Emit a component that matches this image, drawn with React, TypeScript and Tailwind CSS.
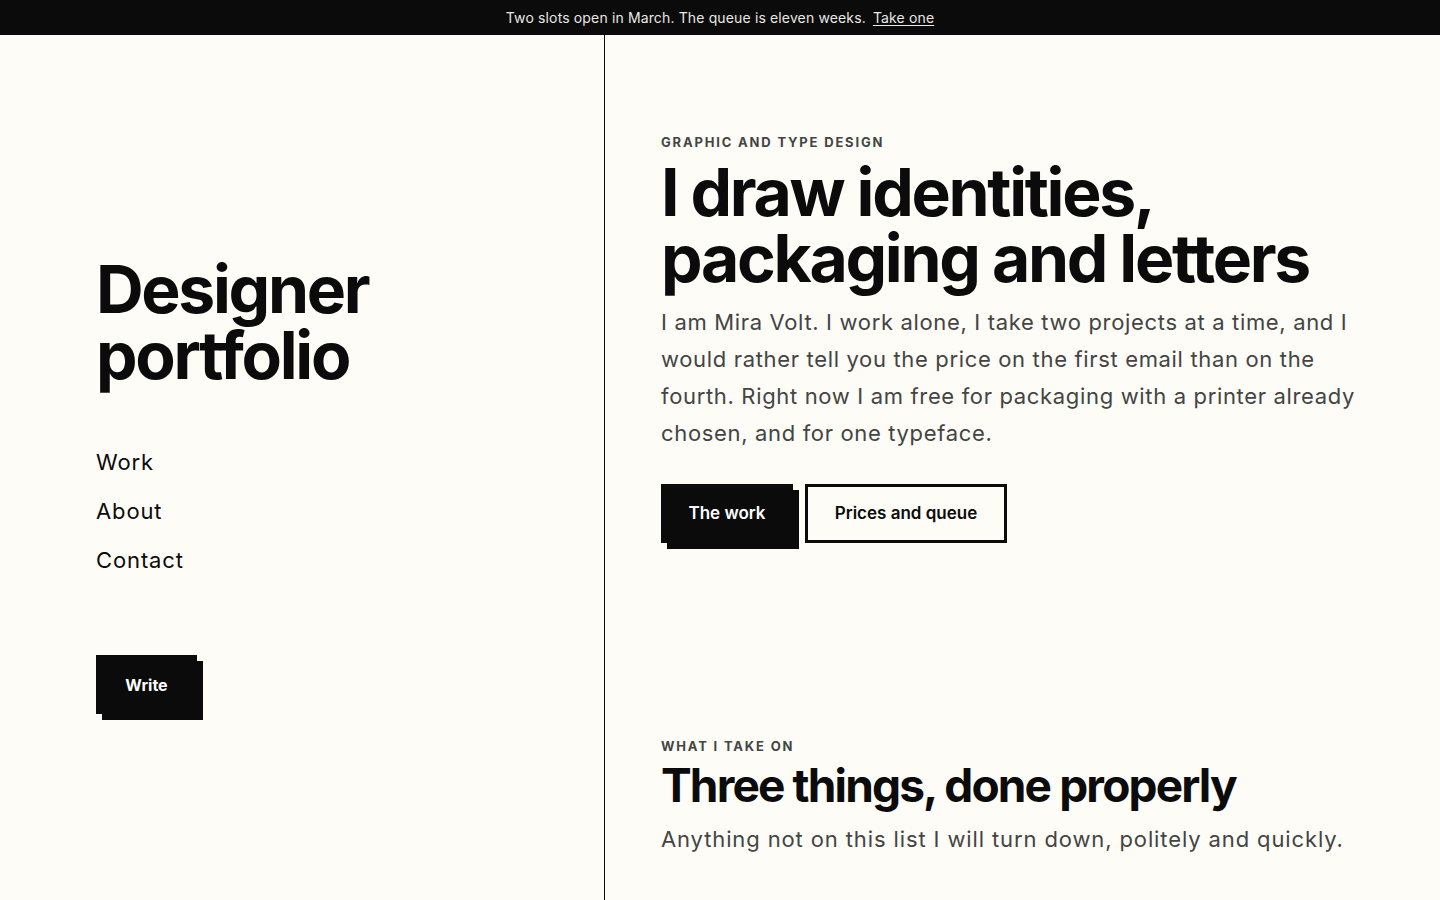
export default function App() {
  const links = ["Work", "About", "Contact"];

  return (
    <div className="min-h-screen bg-[#fdfcf7] text-[#0b0b0b] font-['Inter','Noto_Sans',sans-serif]">
      <div className="h-[35px] bg-[#0b0b0b] flex items-center justify-center gap-[7px] text-[14px] tracking-[0.01em] text-[#e8e8e4]">
        <span>Two slots open in March. The queue is eleven weeks.</span>
        <a href="#" className="underline underline-offset-2">Take one</a>
      </div>

      <div className="flex h-[865px]">
        <aside className="w-[605px] shrink-0 border-r border-[#0b0b0b] pl-24 pt-[221px]">
          <h1 className="text-[66px] leading-[66px] font-bold tracking-[-0.035em]">
            Designer
            <br />
            portfolio
          </h1>

          <nav className="mt-[58px] flex flex-col gap-4">
            {links.map((l) => (
              <a key={l} href="#" className="text-[22px] leading-[33px] tracking-[0.04em]">
                {l}
              </a>
            ))}
          </nav>

          <div className="mt-[78px] relative w-[101px] h-[59px]">
            <div className="absolute left-[6px] top-[6px] w-[101px] h-[59px] bg-[#0b0b0b]" />
            <button className="relative w-[101px] h-[59px] bg-[#0b0b0b] text-white text-[16px] font-bold">
              Write
            </button>
          </div>
        </aside>

        <main className="flex-1 pl-14 pt-[97px]">
          <p className="text-[13px] leading-5 font-bold tracking-[0.14em] text-[#444]">
            GRAPHIC AND TYPE DESIGN
          </p>
          <h2 className="mt-[7px] text-[66px] leading-[66px] font-bold tracking-[-0.035em]">
            I draw identities,
            <br />
            packaging and letters
          </h2>
          <p className="mt-[13px] max-w-[720px] text-[22px] leading-[37px] tracking-[0.03em] text-[#444]">
            I am Mira Volt. I work alone, I take two projects at a time, and I would rather tell you the price
            on the first email than on the fourth. Right now I am free for packaging with a printer already
            chosen, and for one typeface.
          </p>

          <div className="mt-8 flex gap-3">
            <div className="relative w-[132px] h-[59px]">
              <div className="absolute left-[6px] top-[6px] w-[132px] h-[59px] bg-[#0b0b0b]" />
              <button className="relative w-[132px] h-[59px] bg-[#0b0b0b] text-white text-[17px] font-semibold">
                The work
              </button>
            </div>
            <button className="w-[202px] h-[59px] border-[3px] border-[#0b0b0b] text-[17px] font-semibold">
              Prices and queue
            </button>
          </div>

          <p className="mt-[193px] text-[13px] leading-5 font-bold tracking-[0.14em] text-[#444]">
            WHAT I TAKE ON
          </p>
          <h3 className="mt-[3px] text-[46px] leading-[52px] font-bold tracking-[-0.04em]">
            Three things, done properly
          </h3>
          <p className="mt-[10px] text-[22px] leading-[37px] tracking-[0.04em] text-[#444]">
            Anything not on this list I will turn down, politely and quickly.
          </p>
        </main>
      </div>
    </div>
  );
}
